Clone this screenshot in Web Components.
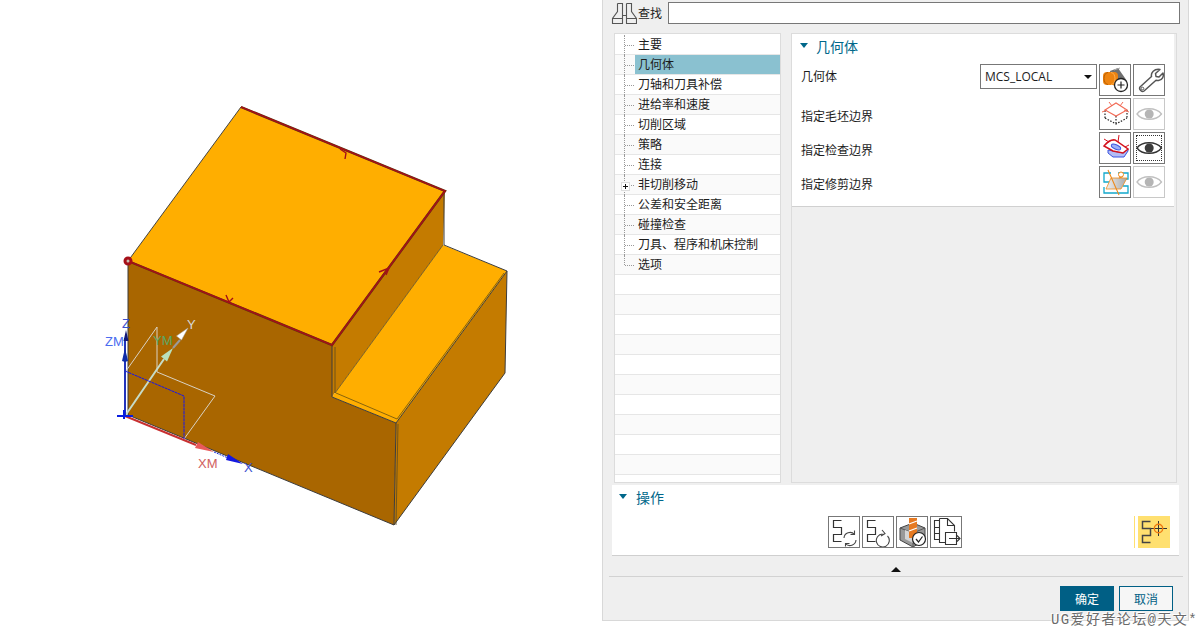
<!DOCTYPE html>
<html>
<head>
<meta charset="utf-8">
<style>
  html, body { margin: 0; height: 100%; background: #fff; overflow: hidden; }
  body { display: flex; font: 12px "Noto Sans CJK SC", "Noto Sans", sans-serif; color: #1c1c1c; }
</style>
</head>
<body>
<cad-view></cad-view>
<op-dialog>
  <find-bar slot="find"></find-bar>
  <nav-tree slot="tree">
    <tree-row>主要</tree-row>
    <tree-row selected>几何体</tree-row>
    <tree-row>刀轴和刀具补偿</tree-row>
    <tree-row>进给率和速度</tree-row>
    <tree-row>切削区域</tree-row>
    <tree-row>策略</tree-row>
    <tree-row>连接</tree-row>
    <tree-row expand>非切削移动</tree-row>
    <tree-row>公差和安全距离</tree-row>
    <tree-row>碰撞检查</tree-row>
    <tree-row>刀具、程序和机床控制</tree-row>
    <tree-row last>选项</tree-row>
  </nav-tree>
  <geo-page slot="page"></geo-page>
  <ops-section slot="ops"></ops-section>
</op-dialog>
<script>
function steps(x, y, color, w) {
  return `<path d="M${x + 8} ${y}h-8v7h8v7h-8v7h8" fill="none" stroke="${color}" stroke-width="${w}"/>`;
}
function eye(fill, stroke) {
  return `<path d="M3 15C8 8 22 8 27.500 15 22 22 8 22 3 15z" fill="#fff" stroke="${stroke}" stroke-width="1.300"/><circle cx="15.200" cy="15" r="4.500" fill="${fill}"/>`;
}

// icons live in one table so the buttons only need a name
const ICONS = {
  geom: `<path d="M10 6l8-3 9 13-5 9-9-5z" fill="#6f6f6f"/><path d="M14 5l6-2" stroke="#aaa"/><rect x="3" y="7" width="15" height="13" rx="4" fill="#ee8410"/><path d="M8 7.500a4 6 0 0 0 0 12" fill="none" stroke="#b85d00"/><path d="M11 7.500a4 6 0 0 1 0 12" fill="none" stroke="#ffb050"/><circle cx="21" cy="20" r="6.500" fill="#fff" stroke="#222" stroke-width="1.300"/><path d="M21 16.500v7M17.500 20h7" stroke="#222" stroke-width="1.200"/>`,
  wrench: `<path d="M26 4.500l-4.500 4 .5 3 3 .5 4-4c1 3.500-.5 7-4.500 7.500-1 .1-2-.1-2.500-.3L10 26c-2 1.500-5.500-1.500-4-4l11.500-10.500c-.8-3.500 2.500-8 8.500-7z" fill="none" stroke="#555" stroke-width="1.500" stroke-linejoin="round"/><circle cx="8.500" cy="23.500" r="1.300" fill="none" stroke="#555"/>`,
  blank: `<path d="M5 19v-8M27 11v8M16 17v8M5 19l11 6 11-6" fill="none" stroke="#222" stroke-width="1.200" stroke-dasharray="1.500 1.500"/><path d="M5 11l11-7 11 7-11 6z" fill="none" stroke="#f26a55" stroke-width="1.100"/><path d="M9 3l3 4M23 3l-3 4M2 13l5-2M29 13l-5-2" stroke="#f26a55" fill="none"/>`,
  check: `<path d="M8 17v3l5 4h11l4-6v-2l-5 4-10-2z" fill="#b4bdf5" stroke="#3a55e0"/><path d="M4 13Q10 6 15 7L28 16 23 20 13 18z" fill="#fff" stroke="#d4121c" stroke-width="1.500"/><ellipse cx="16" cy="14" rx="5" ry="2.200" transform="rotate(25 16 14)" fill="#9db0f5" stroke="#3a55e0"/><path d="M18 9l1-7M9 9L4 6M25 14l4-2" stroke="#d4121c"/>`,
  trim: `<defs><linearGradient id="g" x1="0" x2="1"><stop offset="0" stop-color="#f0f0f0"/><stop offset="1" stop-color="#a8a8a8"/></linearGradient></defs><path d="M11 6H4v9h5M4 20v6h24v-7h-5M18 6h10v6h-3" fill="none" stroke="#12a8cc" stroke-width="1.300"/><path d="M11 11h16l-6 11H6z" fill="url(#g)" stroke="#ee8a1a" stroke-width=".8"/><path d="M8 3l11 25M19 11l4-1.500" stroke="#ee8a1a" stroke-width="1.100" fill="none"/><circle cx="21" cy="7.500" r="2.500" fill="#fff" stroke="#ee8a1a"/>`,
  regen: steps(4.5, 3.5, '#333', 1.2) + `<path d="M15 21a6 6 0 0 1 10.500-3.500M27 23a6 6 0 0 1-10.500 3.500M25.500 13.500v4h-4M16.500 29.500v-3h4" fill="none" stroke="#444" stroke-width="1.100"/>`,
  replay: steps(4.5, 3.5, '#333', 1.2) + `<path d="M24.500 19a6.500 6.500 0 1 1-5-2M19 13l3 3.500-4 2.500" fill="none" stroke="#444" stroke-width="1.100"/>`,
  verify: `<path d="M3 11l13-5 12 5v12l-12 7-13-7z" fill="#999" stroke="#444"/><path d="M3 11l13 5 12-5M16 16v14" fill="none" stroke="#555"/><path d="M8 13l8 3v10l-8-4z" fill="#d5d5d5"/><path d="M12 1h8v20h-8z" fill="#e67a22"/><path d="M12 7l8-3M12 14l8-3" stroke="#fff" stroke-width="1.200"/><circle cx="22" cy="22" r="6.500" fill="#fff" stroke="#222" stroke-width="1.200"/><path d="M19 22l2.500 3 4-5.500" fill="none" stroke="#222" stroke-width="1.200"/>`,
  output: `<path d="M8.500 3.500h-5v19h5M3.500 10.500h5M3.500 16.500h5" fill="none" stroke="#333" stroke-width="1.100"/><path d="M8.500 1.500h8l7 7v6M16.500 1.500v7h7M8.500 1.500v24h6" fill="none" stroke="#333" stroke-width="1.100"/><path d="M14.500 15.500h11v12h-11z" fill="#fff" stroke="#333" stroke-width="1.100"/><path d="M18 21.500h11M26 18.500l3 3-3 3" fill="none" stroke="#333" stroke-width="1.100"/>`,
  locate: steps(4.5, 5.5, '#444', 1.5) + `<path d="M13 12.500h16M20.500 5v15" stroke="#333" stroke-width="1"/><circle cx="20.500" cy="12.500" r="4.200" fill="none" stroke="#ee7a10" stroke-width="1.400"/>`,
  eyeOff: eye('#b5b5b5', '#c0c0c0'),
  eyeOn: eye('#3c3c3c', '#333')
};

class CadView extends HTMLElement {
  connectedCallback() {
    this.attachShadow({ mode: 'open' }).innerHTML = `
    <style>
      :host { display: block; width: 602px; height: 628px; flex: none; position: relative; }
      svg { display: block; }
      text { font: 13px "Liberation Sans", sans-serif; }
    </style>
    <svg width="602" height="628" viewBox="0 0 602 628">
      <path d="M128 261L332 345V397L396 423 394 525 128 415z" fill="#a96600"/>
      <path d="M445 191L332 345V397L443 245z" fill="#c47b00"/>
      <path d="M507 271L396 423 394 525 505 373z" fill="#c47b00"/>
      <path d="M241 107L445 191 332 345 128 261z" fill="#ffae00"/>
      <path d="M443 245L507 271 396 423 332 397z" fill="#ffae00"/>
      <g fill="none" stroke="#3c3c3c" stroke-width="1">
        <path d="M444 191V245L507 271 505 373 394 525 128 415"/>
        <path d="M332 345V397L396 423 394 525M396 423L507 271"/>
        <path d="M335 347V393L443 245M398 424L396 525" stroke="#5c4a20" stroke-width=".8"/>
        <path d="M336 393L397 419 504 273" stroke="#6a5010" stroke-width=".8"/>
        <path d="M128 261L241 107" stroke="#444"/>
      </g>
      <path d="M128 261V415" stroke="#3b3b3b" fill="none"/>
      <path d="M241 107L445 191 332 345 128 261" fill="none" stroke="#5a3a10" stroke-width="2.400"/>
      <path d="M241 107L445 191 332 345 128 261" fill="none" stroke="#a50f18" stroke-width="1.600"/>
      <path d="M340 149l6 4-1 6M379 272l10-4-3 7M226 295l3 7 4-4" fill="none" stroke="#a50f18" stroke-width="1.400"/>
      <circle cx="128" cy="261" r="3" fill="#c8c0b0" stroke="#a50f18" stroke-width="3"/>
      <!-- datum planes -->
      <g fill="none" stroke="#d9d2c4" stroke-width="1">
        <path d="M126 371L157 327V372L215 396 184 439"/>
        <path d="M125 416L164 359" stroke="#c6dcc8" stroke-width="2"/>
      </g>
      <path d="M125 371L184 396V439" fill="none" stroke="#1414f0" stroke-width="1" stroke-dasharray="3 .6"/>
      <path d="M125 416L196 445" stroke="#c83030" stroke-width="2"/>
      <path d="M125 416V338" stroke="#2233bb" stroke-width="2"/>
      <path d="M117 416h16M124 410v9" stroke="#0a1ee0" stroke-width="2"/>
      <path d="M126 330l-2.500 11h5z" fill="#11187a"/>
      <path d="M125 348l-3 13 3 1 3-1z" fill="#0e2ca8"/>
      <path d="M167 361.500L161 356.500 173 348z" fill="#b9e0bb"/>
      <path d="M173 348L180 340" stroke="#9a9a9a" stroke-width="2"/>
      <path d="M181.500 340L176.500 336 188 328z" fill="#fff" stroke="#aaa" stroke-width=".5"/>
      <path d="M198 442L214 452 195 448z" fill="#e85a5a"/>
      <path d="M214 452l14 6" stroke="#1a2ee0" stroke-width="1" stroke-dasharray="2 1"/>
      <path d="M228 454L243 464 226 460z" fill="#1418e0"/>
      <text x="122" y="328" fill="#3b4fd0">Z</text>
      <text x="105" y="346" fill="#4a6cf0">ZM</text>
      <text x="187" y="329" fill="#d8d8d8">Y</text>
      <text x="153" y="345" fill="#5aa868">YM</text>
      <text x="198" y="468" fill="#d06060">XM</text>
      <text x="244" y="472" fill="#3b4fd0">X</text>
    </svg>`;
  }
}

class OpDialog extends HTMLElement {
  connectedCallback() {
    this.attachShadow({ mode: 'open' }).innerHTML = `
    <style>
      :host { display: block; width: 587px; height: 621px; flex: none; box-sizing: border-box; position: relative;
        background: #efefef; border-left: 1px solid #d8d8d8; border-right: 1px solid #d8d8d8; border-bottom: 1px solid #d8d8d8; }
      .body { display: flex; flex-direction: column; height: 100%; padding: 0 0 0 9px; box-sizing: border-box; }
      .mid { display: flex; gap: 10px; margin-top: 8px; height: 451px; padding-left: 2px; }
      .ops { margin-top: 1px; }
      .fold { height: 20px; display: flex; justify-content: center; align-items: center; width: 567px; }
      .fold i { width: 0; height: 0; border: 5px solid transparent; border-top: 0; border-bottom: 5px solid #111; margin-top: 6px; }
      .rule { height: 1px; background: #d2d2d2; margin-left: -3px; width: 574px; }
      .btns { display: flex; gap: 5px; justify-content: flex-end; padding: 9px 15px 0 0; }
      button { width: 54px; height: 25px; box-sizing: border-box; font: inherit; padding: 0; border: 1.500px solid #005f85; background: #f6f6f6; color: #005f85; }
      button.ok { background: #005f85; color: #fff; }
      .mark { position: absolute; left: 448px; top: 608px; white-space: nowrap; font: 14px "Liberation Mono", "Noto Sans CJK SC", monospace; color: #6a6a6a;
        letter-spacing: 1.400px; text-shadow: 1px 1px 0 #fff, -1px -1px 0 #fff; }
    </style>
    <div class="body">
      <slot name="find"></slot>
      <div class="mid"><slot name="tree"></slot><slot name="page"></slot></div>
      <div class="ops"><slot name="ops"></slot></div>
      <div class="fold"><i></i></div>
      <div class="rule"></div>
      <div class="btns"><button class="ok">确定</button><button>取消</button></div>
    </div>
    <div class="mark">UG爱好者论坛@天文*</div>`;
  }
}

class FindBar extends HTMLElement {
  connectedCallback() {
    this.attachShadow({ mode: 'open' }).innerHTML = `
    <style>
      :host { display: flex; align-items: center; height: 25px; width: 568px; margin-left: -1px; }
      svg { flex: none; }
      span { margin: 0 6px 0 1px; }
      .box { flex: 1; height: 22px; box-sizing: border-box; background: #fff; border: 1px solid #777; margin-top: 1px; margin-right: -1px; }
    </style>
    <svg width="26" height="25" viewBox="0 0 26 25" fill="none" stroke="#555" stroke-width="1.100">
      <path d="M6.500 3.500h5v15M6.500 3.500v8L1.500 18.500v5h10v-5h-10"/>
      <path d="M15.500 3.500h5v8l5 7v5h-10v-5h10M15.500 3.500v15M11.500 15.500h4"/>
    </svg>
    <span>查找</span><div class="box"></div>`;
  }
}

class NavTree extends HTMLElement {
  connectedCallback() {
    let blanks = '';
    for (let i = 0; i < 10; i++) blanks += `<div class="blank${i % 2 ? ' alt' : ''}"></div>`;
    this.attachShadow({ mode: 'open' }).innerHTML = `
    <style>
      :host { display: block; width: 167px; height: 450px; box-sizing: border-box; background: #fff; border: 1px solid #dcdcdc; padding-top: 1px; overflow: hidden; flex: none; }
      .blank { height: 19px; border-bottom: 1px solid #e6e6e6; }
      .alt { background: #fafafa; }
    </style>
    <slot></slot>${blanks}`;
  }
}

class TreeRow extends HTMLElement {
  connectedCallback() {
    const last = this.hasAttribute('last');
    const expand = this.hasAttribute('expand');
    this.attachShadow({ mode: 'open' }).innerHTML = `
    <style>
      :host { display: block; height: 20px; box-sizing: border-box; border-bottom: 1px solid #e6e6e6; position: relative; padding-left: 20px; }
      :host(:nth-child(even)) { background: #fafafa; }
      .txt { display: block; height: 19px; line-height: 18px; padding-left: 3px; }
      :host([selected]) .txt { background: #8ac1d0; }
      .v { position: absolute; left: 9px; top: 0; height: ${last ? '10px' : '20px'}; border-left: 1px dotted #999; }
      .h { position: absolute; left: 10px; top: 10px; width: 9px; border-top: 1px dotted #999; }
      .plus { position: absolute; left: 6px; top: 7px; width: 7px; height: 7px; background: #fff; border: 1px solid #ddd; font-size: 0; }
      .plus::before { content: ''; position: absolute; left: 1px; top: 3px; width: 5px; height: 1px; background: #111; }
      .plus::after { content: ''; position: absolute; left: 3px; top: 1px; width: 1px; height: 5px; background: #111; }
    </style>
    <i class="v"></i><i class="h"></i>${expand ? '<i class="plus"></i>' : ''}
    <span class="txt"><slot></slot></span>`;
  }
}

class IconBtn extends HTMLElement {
  connectedCallback() {
    const name = this.getAttribute('icon');
    this.attachShadow({ mode: 'open' }).innerHTML = `
    <style>
      :host { display: block; width: 32px; height: 32px; box-sizing: border-box; border: 1px solid #777; background: #fff; position: relative; flex: none; }
      :host([off]) { border-color: #c8c8c8; }
      :host([focus]) svg { outline: 1px dotted #333; outline-offset: -3px; }
      :host([flat]) { border: 0; background: #ffe070; }
      svg { display: block; width: 30px; height: 30px; overflow: hidden; }
    </style>
    <svg viewBox="0 0 30 30">${ICONS[name]}</svg>`;
  }
}

class GeoPage extends HTMLElement {
  connectedCallback() {
    this.attachShadow({ mode: 'open' }).innerHTML = `
    <style>
      :host { display: block; width: 386px; height: 450px; box-sizing: border-box; border: 1px solid #dcdcdc; flex: none; }
      .sec { background: #fff; width: 382px; height: 173px; border-bottom: 1px solid #d0d0d0; box-sizing: border-box; padding: 0 9px; }
      .head { height: 29px; padding-bottom: 6px; box-sizing: border-box; display: flex; align-items: center; gap: 8px; font-size: 14px; color: #00678a; margin-left: -1px; }
      .head i { width: 0; height: 0; border: 4px solid transparent; border-bottom: 0; border-top: 5px solid #00678a; }
      .row { display: flex; align-items: center; gap: 2px; height: 34px; }
      .row span { flex: 1; padding-top: 3px; }
      .row.first span { padding: 0; align-self: flex-start; line-height: 25px; }
      .sel { width: 117px; height: 25px; box-sizing: border-box; border: 1px solid #777; background: #fff; display: flex; align-items: center;
        padding: 0 4px; font: 12px "Open Sans", sans-serif; margin-bottom: 7px; }
      .sel b { margin-left: auto; width: 0; height: 0; border: 4px solid transparent; border-bottom: 0; border-top: 4px solid #111; }
    </style>
    <div class="sec">
      <div class="head"><i></i>几何体</div>
      <div class="row first"><span>几何体</span><div class="sel">MCS_LOCAL<b></b></div><icon-btn icon="geom"></icon-btn><icon-btn icon="wrench"></icon-btn></div>
      <div class="row"><span>指定毛坯边界</span><icon-btn icon="blank"></icon-btn><icon-btn icon="eyeOff" off></icon-btn></div>
      <div class="row"><span>指定检查边界</span><icon-btn icon="check"></icon-btn><icon-btn icon="eyeOn" focus></icon-btn></div>
      <div class="row"><span>指定修剪边界</span><icon-btn icon="trim"></icon-btn><icon-btn icon="eyeOff" off></icon-btn></div>
    </div>`;
  }
}

class OpsSection extends HTMLElement {
  connectedCallback() {
    this.attachShadow({ mode: 'open' }).innerHTML = `
    <style>
      :host { display: block; width: 567px; height: 71px; box-sizing: border-box; background: #fff; border-bottom: 1px solid #cfcfcf; padding: 0 7px; }
      .head { height: 27px; padding-bottom: 4px; box-sizing: border-box; display: flex; align-items: center; gap: 9px; font-size: 14px; color: #00678a; }
      .head i { width: 0; height: 0; border: 4px solid transparent; border-bottom: 0; border-top: 5px solid #00678a; }
      .tools { display: flex; gap: 2px; padding: 4px 0 0 209px; }
      .sp { width: 170px; flex: none; border-right: 1px solid #ffe070; margin-right: 1px; }
    </style>
    <div class="head"><i></i>操作</div>
    <div class="tools">
      <icon-btn icon="regen"></icon-btn><icon-btn icon="replay"></icon-btn><icon-btn icon="verify"></icon-btn><icon-btn icon="output"></icon-btn>
      <div class="sp"></div><icon-btn icon="locate" flat></icon-btn>
    </div>`;
  }
}

customElements.define('cad-view', CadView);
customElements.define('op-dialog', OpDialog);
customElements.define('find-bar', FindBar);
customElements.define('nav-tree', NavTree);
customElements.define('tree-row', TreeRow);
customElements.define('icon-btn', IconBtn);
customElements.define('geo-page', GeoPage);
customElements.define('ops-section', OpsSection);
</script>
</body>
</html>
